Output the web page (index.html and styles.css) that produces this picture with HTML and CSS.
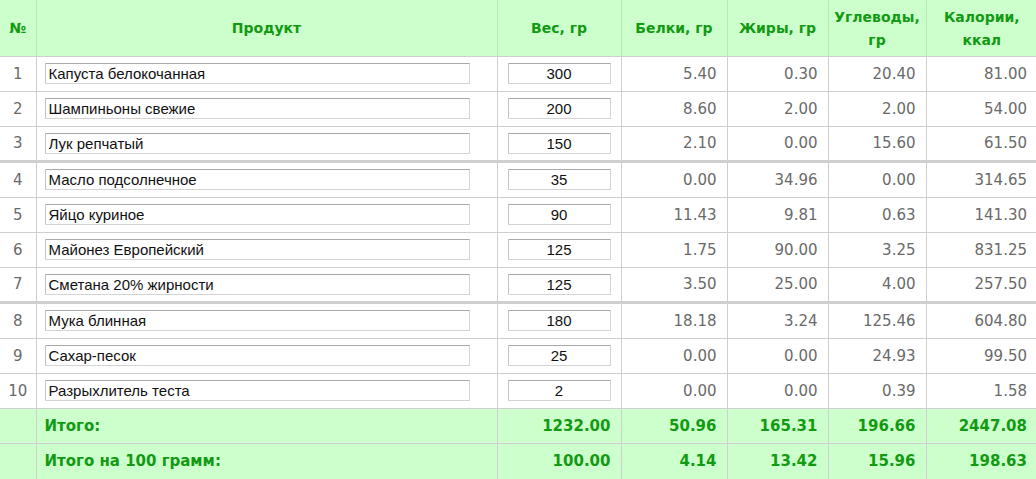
FILE: index.html
```html
<!DOCTYPE html>
<html lang="ru">
<head>
<meta charset="utf-8">
<title>Калькулятор калорий</title>
<link rel="stylesheet" href="styles.css">
</head>
<body>
<table class="calc">
  <colgroup>
    <col class="c-num">
    <col class="c-prod">
    <col class="c-wt">
    <col class="c-b">
    <col class="c-j">
    <col class="c-u">
    <col class="c-k">
  </colgroup>
  <thead>
    <tr class="head">
      <th>№</th>
      <th>Продукт</th>
      <th>Вес, гр</th>
      <th>Белки, гр</th>
      <th>Жиры, гр</th>
      <th>Углеводы,<br>гр</th>
      <th>Калории,<br>ккал</th>
    </tr>
  </thead>
  <tbody>
    <tr><td class="n">1</td><td class="p"><input class="prod" type="text" value="Капуста белокочанная"></td><td class="w"><input class="wt" type="text" value="300"></td><td>5.40</td><td>0.30</td><td>20.40</td><td>81.00</td></tr>
    <tr><td class="n">2</td><td class="p"><input class="prod" type="text" value="Шампиньоны свежие"></td><td class="w"><input class="wt" type="text" value="200"></td><td>8.60</td><td>2.00</td><td>2.00</td><td>54.00</td></tr>
    <tr><td class="n">3</td><td class="p"><input class="prod" type="text" value="Лук репчатый"></td><td class="w"><input class="wt" type="text" value="150"></td><td>2.10</td><td>0.00</td><td>15.60</td><td>61.50</td></tr>
    <tr class="group"><td class="n">4</td><td class="p"><input class="prod" type="text" value="Масло подсолнечное"></td><td class="w"><input class="wt" type="text" value="35"></td><td>0.00</td><td>34.96</td><td>0.00</td><td>314.65</td></tr>
    <tr><td class="n">5</td><td class="p"><input class="prod" type="text" value="Яйцо куриное"></td><td class="w"><input class="wt" type="text" value="90"></td><td>11.43</td><td>9.81</td><td>0.63</td><td>141.30</td></tr>
    <tr><td class="n">6</td><td class="p"><input class="prod" type="text" value="Майонез Европейский"></td><td class="w"><input class="wt" type="text" value="125"></td><td>1.75</td><td>90.00</td><td>3.25</td><td>831.25</td></tr>
    <tr><td class="n">7</td><td class="p"><input class="prod" type="text" value="Сметана 20% жирности"></td><td class="w"><input class="wt" type="text" value="125"></td><td>3.50</td><td>25.00</td><td>4.00</td><td>257.50</td></tr>
    <tr class="group"><td class="n">8</td><td class="p"><input class="prod" type="text" value="Мука блинная"></td><td class="w"><input class="wt" type="text" value="180"></td><td>18.18</td><td>3.24</td><td>125.46</td><td>604.80</td></tr>
    <tr><td class="n">9</td><td class="p"><input class="prod" type="text" value="Сахар-песок"></td><td class="w"><input class="wt" type="text" value="25"></td><td>0.00</td><td>0.00</td><td>24.93</td><td>99.50</td></tr>
    <tr><td class="n">10</td><td class="p"><input class="prod" type="text" value="Разрыхлитель теста"></td><td class="w"><input class="wt" type="text" value="2"></td><td>0.00</td><td>0.00</td><td>0.39</td><td>1.58</td></tr>
  </tbody>
  <tfoot>
    <tr class="total"><td></td><td class="label">Итого:</td><td>1232.00</td><td>50.96</td><td>165.31</td><td>196.66</td><td>2447.08</td></tr>
    <tr class="total last"><td></td><td class="label">Итого на 100 грамм:</td><td>100.00</td><td>4.14</td><td>13.42</td><td>15.96</td><td>198.63</td></tr>
  </tfoot>
</table>
</body>
</html>
```

FILE: styles.css
```css
html, body {
  margin: 0;
  padding: 0;
  background: #fff;
}

.calc {
  border-collapse: collapse;
  table-layout: fixed;
  width: 1037px;
  font-family: "DejaVu Sans", Verdana, sans-serif;
  font-size: 15px;
  color: #6a6a6a;
}

.c-num { width: 36px; }
.c-prod { width: 461px; }
.c-wt { width: 124px; }
.c-b { width: 106px; }
.c-j { width: 101px; }
.c-u { width: 98px; }
.c-k { width: 111px; }

.calc td, .calc th {
  border: 1px solid #cfcfcf;
  padding: 0 10px 0 0;
  text-align: right;
  height: 34px;
  box-sizing: border-box;
  white-space: nowrap;
}

.calc .head th {
  background: #ccffcc;
  color: #129a12;
  font-size: 14px;
  font-weight: bold;
  text-align: center;
  height: 56px;
  padding: 2px 0 0;
  line-height: 23px;
  border-color: #b9e8b9;
  border-bottom-color: #cfcfcf;
  border-top: none;
}

.calc tbody tr { height: 35px; }
.calc tbody tr.group { height: 36px; }

.calc tr.group td {
  border-top: 3px solid #cfcfcf;
  height: 36px;
}

.calc td.n {
  text-align: center;
  padding: 0;
}

.calc td.p {
  text-align: left;
  padding: 0 0 0 8px;
}

.calc td.w {
  text-align: left;
  padding: 0 0 0 10px;
}

.prod, .wt {
  box-sizing: border-box;
  height: 21px;
  margin: 0;
  padding: 0 3px;
  font-family: "Liberation Sans", Arial, sans-serif;
  font-size: 15px;
  color: #111;
  background: #fff;
  border: 1px solid #d4d4d4;
  border-top-color: #a9a9a9;
  border-left-color: #c4c4c4;
  border-radius: 1px;
  vertical-align: middle;
  display: block;
}

.prod { width: 425px; }

.wt {
  width: 103px;
  text-align: center;
}

.calc tr.total td {
  background: #ccffcc;
  color: #129a12;
  font-weight: bold;
  height: 35px;
  border-color: #cfcfcf;
}

.calc tr.total.last td {
  height: 36px;
  border-bottom: none;
}

.calc tr.total td.label {
  text-align: left;
  padding-left: 8px;
}

.calc tr td:first-child, .calc tr th:first-child { border-left: none; }
.calc tr td:last-child, .calc tr th:last-child { border-right: none; }
```
